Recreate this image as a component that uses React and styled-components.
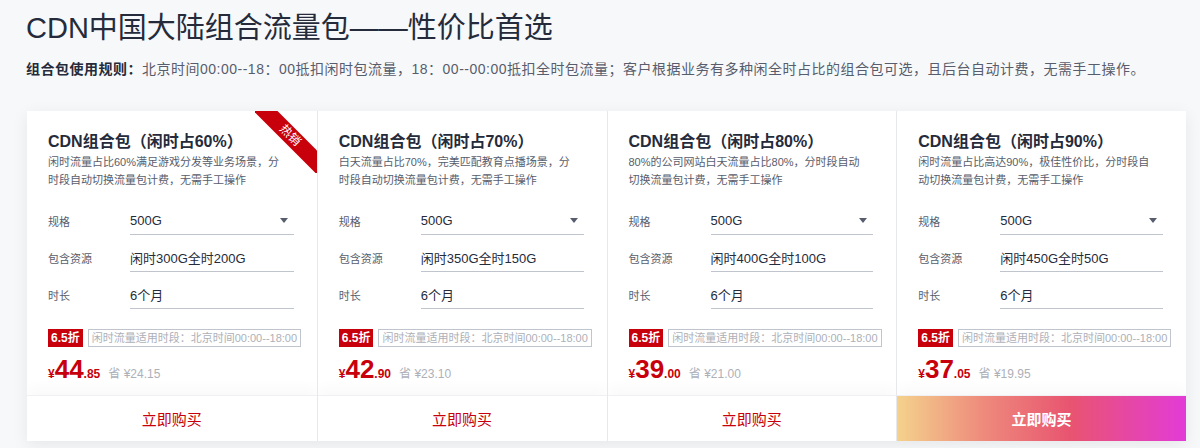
import React from 'react';
import styled, { createGlobalStyle } from 'styled-components';

const GlobalStyle = createGlobalStyle`
    body {
        margin: 0;
        background: #f7f8fa;
        font-family: "Liberation Sans", "Noto Sans CJK SC", sans-serif;
        color: #252b3a;
    }
`;

const Page = styled.main`
    padding: 8px 14px 0 27px;
    height: 448px;
    box-sizing: border-box;
`;

const Title = styled.h1`
    margin: 0 0 0 -1px;
    font-size: 29px;
    line-height: 40px;
    font-weight: normal;
    color: #252b3a;
`;

const Rules = styled.p`
    margin: 11px 0 0 -1px;
    font-size: 14px;
    line-height: 20px;
    letter-spacing: 0.5px;
    color: #575d6c;

    strong {
        color: #252b3a;
    }
`;

const CardGrid = styled.div`
    margin-top: 32px;
    display: grid;
    grid-template-columns: repeat(4, 1fr);
    background: #fff;
    box-shadow: 0 4px 16px rgba(0, 0, 0, 0.07);
`;

const Card = styled.section`
    position: relative;
    display: flex;
    flex-direction: column;
    height: 330px;
    border-left: ${(p) => (p.$first ? 'none' : '1px solid #e6e8eb')};
    overflow: hidden;
`;

const CardBody = styled.div`
    padding: 20px 23px 0 21px;
`;

const CardTitle = styled.h3`
    margin: 0;
    font-size: 16px;
    line-height: 22px;
    font-weight: bold;
    color: #252b3a;
`;

const Desc = styled.p`
    margin: 0;
    width: 232px;
    font-size: 11px;
    line-height: 18px;
    color: #575d6c;
`;

const Form = styled.div`
    margin-top: 18px;
    display: flex;
    flex-direction: column;
    gap: 9px;
`;

const Row = styled.div`
    display: flex;
    align-items: center;
    height: 28px;
`;

const Label = styled.span`
    width: 82px;
    font-size: 11px;
    color: #575d6c;
`;

const Field = styled.div`
    flex: 1;
    height: 28px;
    display: flex;
    align-items: center;
    justify-content: space-between;
    border-bottom: 1px solid #c0c4cc;
    box-sizing: border-box;
    padding-right: 6px;
    font-size: 13px;
    color: #252b3a;
`;

const Caret = styled.span`
    width: 0;
    height: 0;
    border-left: 4px solid transparent;
    border-right: 4px solid transparent;
    border-top: 5px solid #575d6c;
`;

const TagRow = styled.div`
    margin-top: 20px;
    display: flex;
    align-items: center;
    gap: 5px;
    white-space: nowrap;
`;

const Discount = styled.span`
    height: 18px;
    line-height: 18px;
    padding: 0 3px;
    background: #c7000b;
    color: #fff;
    font-size: 12px;
    font-weight: bold;
`;

const Period = styled.span`
    height: 18px;
    line-height: 16px;
    box-sizing: border-box;
    padding: 0 3px;
    border: 1px solid #c0c4cc;
    color: #adb0b8;
    font-size: 11px;
`;

const PriceRow = styled.div`
    margin-top: 7px;
    display: flex;
    align-items: baseline;
    color: #c7000b;
`;

const Yen = styled.span`
    font-size: 12px;
    font-weight: bold;
`;

const Big = styled.span`
    font-size: 26px;
    font-weight: bold;
    line-height: 30px;
`;

const Cents = styled.span`
    font-size: 12px;
    font-weight: bold;
`;

const Save = styled.span`
    margin-left: 8px;
    font-size: 12px;
    color: #adb0b8;
`;

const BuyButton = styled.button`
    margin-top: auto;
    height: 46px;
    border: none;
    border-top: 1px solid #eef0f3;
    box-shadow: 0 -8px 12px rgba(0, 0, 0, 0.025);
    font-family: inherit;
    font-size: 15px;
    cursor: pointer;
    color: ${(p) => (p.$hot ? '#fff' : '#c7000b')};
    font-weight: ${(p) => (p.$hot ? 'bold' : 'normal')};
    background: ${(p) =>
        p.$hot
            ? 'linear-gradient(90deg, #f4d28c 0%, #ee8a7c 30%, #e85470 60%, #e33bd8 100%)'
            : '#fff'};
`;

const Ribbon = styled.div`
    position: absolute;
    top: 0;
    right: 0;
    width: 62px;
    height: 62px;
    overflow: hidden;
`;

const RibbonBand = styled.div`
    position: absolute;
    left: -15px;
    top: 16px;
    width: 100px;
    height: 17px;
    line-height: 17px;
    background: #c7000b;
    color: #fff;
    font-size: 12px;
    text-align: center;
    transform: rotate(45deg);
`;

const packages = [
    {
        ratio: '60%',
        desc: '闲时流量占比60%满足游戏分发等业务场景，分时段自动切换流量包计费，无需手工操作',
        res: '闲时300G全时200G',
        price: '44',
        cents: '.85',
        save: '24.15',
        hot: true,
    },
    {
        ratio: '70%',
        desc: '白天流量占比70%，完美匹配教育点播场景，分时段自动切换流量包计费，无需手工操作',
        res: '闲时350G全时150G',
        price: '42',
        cents: '.90',
        save: '23.10',
    },
    {
        ratio: '80%',
        desc: '80%的公司网站白天流量占比80%，分时段自动切换流量包计费，无需手工操作',
        res: '闲时400G全时100G',
        price: '39',
        cents: '.00',
        save: '21.00',
    },
    {
        ratio: '90%',
        desc: '闲时流量占比高达90%，极佳性价比，分时段自动切换流量包计费，无需手工操作',
        res: '闲时450G全时50G',
        price: '37',
        cents: '.05',
        save: '19.95',
        gradient: true,
    },
];

const PackageCard = ({ item, first }) => (
    <Card $first={first}>
        {item.hot && (
            <Ribbon>
                <RibbonBand>热销</RibbonBand>
            </Ribbon>
        )}
        <CardBody>
            <CardTitle>CDN组合包（闲时占{item.ratio}）</CardTitle>
            <Desc>{item.desc}</Desc>
            <Form>
                <Row>
                    <Label>规格</Label>
                    <Field>
                        500G
                        <Caret />
                    </Field>
                </Row>
                <Row>
                    <Label>包含资源</Label>
                    <Field>{item.res}</Field>
                </Row>
                <Row>
                    <Label>时长</Label>
                    <Field>6个月</Field>
                </Row>
            </Form>
            <TagRow>
                <Discount>6.5折</Discount>
                <Period>闲时流量适用时段：北京时间00:00--18:00</Period>
            </TagRow>
            <PriceRow>
                <Yen>¥</Yen>
                <Big>{item.price}</Big>
                <Cents>{item.cents}</Cents>
                <Save>省 ¥{item.save}</Save>
            </PriceRow>
        </CardBody>
        <BuyButton $hot={item.gradient}>立即购买</BuyButton>
    </Card>
);

const App = () => (
    <>
        <GlobalStyle />
        <Page>
            <Title>CDN中国大陆组合流量包——性价比首选</Title>
            <Rules>
                <strong>组合包使用规则：</strong>
                北京时间00:00--18：00抵扣闲时包流量，18：00--00:00抵扣全时包流量；客户根据业务有多种闲全时占比的组合包可选，且后台自动计费，无需手工操作。
            </Rules>
            <CardGrid>
                {packages.map((item, i) => (
                    <PackageCard key={item.ratio} item={item} first={i === 0} />
                ))}
            </CardGrid>
        </Page>
    </>
);

export default App;
